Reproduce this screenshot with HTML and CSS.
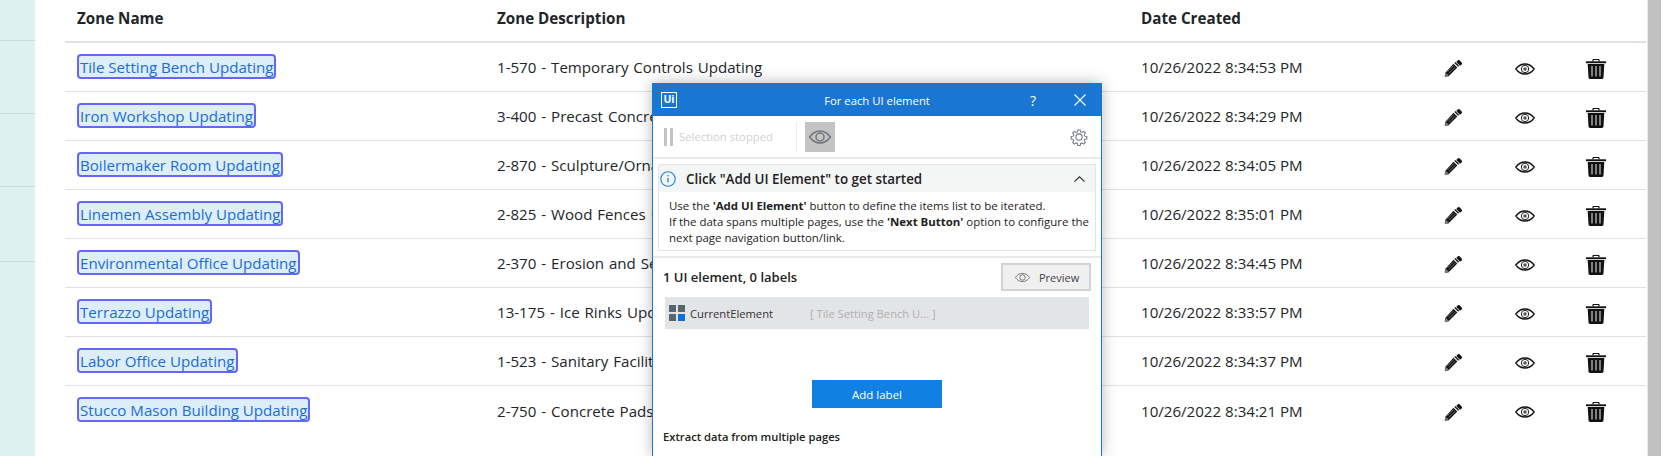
FILE: index.html
```html
<!DOCTYPE html>
<html lang="en">
<head>
<meta charset="utf-8">
<title>Zones</title>
<link rel="stylesheet" href="styles.css">
</head>
<body>
<svg class="defs" width="0" height="0" aria-hidden="true">
  <symbol id="i-pencil" viewBox="0 0 20 20">
    <path d="M14.6 1.4a1.3 1.3 0 0 1 1.800 0l2.200 2.200a1.300 1.300 0 0 1 0 1.800l-1.700 1.700-4-4z" fill="#111"/>
    <path d="M11.900 3.100l4 4-1 1-4-4z" fill="#111"/>
    <path d="M10 5l4 4-8.900 8.900-3.400.9-.9-.9.900-3.600z" fill="#111"/>
    <path d="M1.700 14.300l3.900 3.900-3.900 1-1-1z" fill="#777"/>
    <path d="M10.400 6.800l-7 7M12.100 8.300l-7 7" stroke="#999" stroke-width=".7"/>
  </symbol>
  <symbol id="i-eye" viewBox="0 0 20 12">
    <path d="M.8 6C3.400 2.600 6.500 1 10 1s6.600 1.600 9.200 5C16.600 9.400 13.500 11 10 11S3.400 9.400.8 6z" fill="none" stroke="#111" stroke-width="1.300"/>
    <circle cx="10" cy="6" r="3.700" fill="none" stroke="#222" stroke-width="1"/>
    <circle cx="10" cy="6" r="1.800" fill="#555"/>
  </symbol>
  <symbol id="i-trash" viewBox="0 0 20 20">
    <path d="M7 2.200V1.200C7 .6 7.500.4 8 .4h4c.5 0 1 .2 1 .8v1" fill="none" stroke="#111" stroke-width="1.200"/>
    <path d="M0 2.300h20v1.900H0z" fill="#111"/>
    <path d="M1.700 5h16.600l-.8 13.500c-.1.900-.7 1.400-1.500 1.400H4c-.8 0-1.400-.5-1.500-1.400z" fill="#111"/>
    <path d="M6 7v10.500M10 7v10.500M14 7v10.500" stroke="#ccc" stroke-width="1.200"/>
  </symbol>
  <symbol id="i-eye-thin" viewBox="0 0 30 20">
    <path d="M2 10C6 4.500 10 2.500 15 2.500S24 4.500 28 10C24 15.500 20 17.500 15 17.500S6 15.500 2 10z" fill="none" stroke="currentColor" stroke-width="1.800"/>
    <circle cx="15" cy="10" r="5" fill="none" stroke="currentColor" stroke-width="1.800"/>
  </symbol>
</svg>

<div class="page">
  <aside class="sidebar">
    <div class="side-item side-first"></div>
    <div class="side-item"></div>
    <div class="side-item"></div>
    <div class="side-item side-last"></div>
  </aside>

  <main class="content">
    <table class="zones">
      <colgroup>
        <col class="c-name"><col class="c-desc"><col class="c-date"><col class="c-icon"><col class="c-icon"><col class="c-trash">
      </colgroup>
      <thead>
        <tr><th>Zone Name</th><th>Zone Description</th><th>Date Created</th><th></th><th></th><th></th></tr>
      </thead>
      <tbody>
        <tr>
          <td><a class="zone-link">Tile Setting Bench Updating</a></td><td class="desc">1-570 - Temporary Controls Updating</td><td>10/26/2022 8:34:53 PM</td>
          <td class="act"><svg class="ic-pencil"><use href="#i-pencil"/></svg></td><td class="act"><svg class="ic-eye"><use href="#i-eye"/></svg></td><td class="act act-last"><svg class="ic-trash"><use href="#i-trash"/></svg></td>
        </tr>
        <tr>
          <td><a class="zone-link">Iron Workshop Updating</a></td><td class="desc">3-400 - Precast Concrete Updating</td><td>10/26/2022 8:34:29 PM</td>
          <td class="act"><svg class="ic-pencil"><use href="#i-pencil"/></svg></td><td class="act"><svg class="ic-eye"><use href="#i-eye"/></svg></td><td class="act act-last"><svg class="ic-trash"><use href="#i-trash"/></svg></td>
        </tr>
        <tr>
          <td><a class="zone-link">Boilermaker Room Updating</a></td><td class="desc">2-870 - Sculpture/Ornamental Updating</td><td>10/26/2022 8:34:05 PM</td>
          <td class="act"><svg class="ic-pencil"><use href="#i-pencil"/></svg></td><td class="act"><svg class="ic-eye"><use href="#i-eye"/></svg></td><td class="act act-last"><svg class="ic-trash"><use href="#i-trash"/></svg></td>
        </tr>
        <tr>
          <td><a class="zone-link">Linemen Assembly Updating</a></td><td class="desc">2-825 - Wood Fences Updating</td><td>10/26/2022 8:35:01 PM</td>
          <td class="act"><svg class="ic-pencil"><use href="#i-pencil"/></svg></td><td class="act"><svg class="ic-eye"><use href="#i-eye"/></svg></td><td class="act act-last"><svg class="ic-trash"><use href="#i-trash"/></svg></td>
        </tr>
        <tr>
          <td><a class="zone-link">Environmental Office Updating</a></td><td class="desc">2-370 - Erosion and Sedimentation Updating</td><td>10/26/2022 8:34:45 PM</td>
          <td class="act"><svg class="ic-pencil"><use href="#i-pencil"/></svg></td><td class="act"><svg class="ic-eye"><use href="#i-eye"/></svg></td><td class="act act-last"><svg class="ic-trash"><use href="#i-trash"/></svg></td>
        </tr>
        <tr>
          <td><a class="zone-link">Terrazzo Updating</a></td><td class="desc">13-175 - Ice Rinks Updating</td><td>10/26/2022 8:33:57 PM</td>
          <td class="act"><svg class="ic-pencil"><use href="#i-pencil"/></svg></td><td class="act"><svg class="ic-eye"><use href="#i-eye"/></svg></td><td class="act act-last"><svg class="ic-trash"><use href="#i-trash"/></svg></td>
        </tr>
        <tr>
          <td><a class="zone-link">Labor Office Updating</a></td><td class="desc">1-523 - Sanitary Facilities Updating</td><td>10/26/2022 8:34:37 PM</td>
          <td class="act"><svg class="ic-pencil"><use href="#i-pencil"/></svg></td><td class="act"><svg class="ic-eye"><use href="#i-eye"/></svg></td><td class="act act-last"><svg class="ic-trash"><use href="#i-trash"/></svg></td>
        </tr>
        <tr class="last-row">
          <td><a class="zone-link">Stucco Mason Building Updating</a></td><td class="desc">2-750 - Concrete Pads Updating</td><td>10/26/2022 8:34:21 PM</td>
          <td class="act"><svg class="ic-pencil"><use href="#i-pencil"/></svg></td><td class="act"><svg class="ic-eye"><use href="#i-eye"/></svg></td><td class="act act-last"><svg class="ic-trash"><use href="#i-trash"/></svg></td>
        </tr>
      </tbody>
    </table>
  </main>

  <div class="scrollbar"><div class="thumb"></div></div>
</div>

<section class="dialog">
  <header class="titlebar">
    <div class="title-left"><span class="ui-logo">Ui</span></div>
    <div class="title-text">For each UI element</div>
    <div class="title-right">
      <span class="help">?</span>
      <svg class="close" viewBox="0 0 12 12"><path d="M.5.5l11 11M11.500.5l-11 11" stroke="#fff" stroke-width="1.100" fill="none"/></svg>
    </div>
  </header>

  <div class="toolbar">
    <span class="pause"><i></i><i></i></span>
    <span class="stopped">Selection stopped</span>
    <span class="tool-sep"></span>
    <span class="eye-btn"><svg class="eye-btn-ic"><use href="#i-eye-thin"/></svg></span>
    <svg class="gear" viewBox="0 0 24 24">
      <path d="M10.200 1.500h3.600l.6 3.100 2 .8 2.600-1.800 2.500 2.500-1.800 2.600.8 2 3.100.6v3.600l-3.100.6-.8 2 1.800 2.600-2.500 2.500-2.600-1.800-2 .8-.6 3.100h-3.600l-.6-3.100-2-.8-2.600 1.800-2.500-2.500 1.800-2.600-.8-2-3.100-.6v-3.600l3.100-.6.8-2-1.800-2.600 2.500-2.500 2.600 1.800 2-.8z" transform="translate(1.200 1.200) scale(.9)" fill="none" stroke="#6d7780" stroke-width="1.500"/>
      <circle cx="12" cy="12" r="4.200" fill="none" stroke="#6d7780" stroke-width="1.400"/>
    </svg>
  </div>

  <div class="info">
    <div class="info-head">
      <svg class="info-ic" viewBox="0 0 16 16"><circle cx="8" cy="8" r="7.200" fill="none" stroke="#1a7fe0" stroke-width="1.100"/><path d="M8 7v4.500" stroke="#1a7fe0" stroke-width="1.300"/><circle cx="8" cy="4.800" r=".8" fill="#1a7fe0"/></svg>
      <span class="info-title">Click "Add UI Element" to get started</span>
      <svg class="chev" viewBox="0 0 11 6"><path d="M.5 5.500L5.500.8l5 4.700" fill="none" stroke="#333" stroke-width="1.100"/></svg>
    </div>
    <div class="info-body">
      <p>Use the <b>'Add UI Element'</b> button to define the items list to be iterated.</p>
      <p>If the data spans multiple pages, use the <b>'Next Button'</b> option to configure the</p>
      <p>next page navigation button/link.</p>
    </div>
  </div>

  <div class="elements">
    <div class="elements-head">
      <span class="count">1 UI element, 0 labels</span>
      <button class="preview"><svg class="preview-ic"><use href="#i-eye-thin"/></svg>Preview</button>
    </div>
    <div class="element-row">
      <span class="grid-ic"><i></i><i></i><i></i><i class="blue"></i></span>
      <span class="el-name">CurrentElement</span>
      <span class="el-val">[ Tile Setting Bench U... ]</span>
    </div>
    <div class="add-wrap"><button class="add-label">Add label</button></div>
    <div class="extract">Extract data from multiple pages</div>
  </div>
</section>
</body>
</html>
```

FILE: styles.css
```css
* { box-sizing: border-box; }
html, body { margin: 0; padding: 0; height: 100%; overflow: hidden; background: #fff; }
body { font-family: "Open Sans", "Noto Sans", sans-serif; color: #212529; position: relative; }
.defs { position: absolute; }

.page { display: flex; height: 456px; }

.sidebar { width: 35px; flex: none; background: #ddf1f0; }
.side-item { height: 73px; border-bottom: 1px solid #c9dcdb; }
.side-first { height: 41px; }
.side-last { height: 75px; }

.content { width: 1612px; flex: none; padding-left: 30px; }
.zones { width: 1581px; table-layout: fixed; border-collapse: separate; border-spacing: 0; font-size: 15.100px; }
.c-name { width: 420px; }
.c-desc { width: 644px; }
.c-date { width: 289px; }
.c-icon { width: 71px; }
.c-trash { width: 86px; }

.zones th { height: 43px; padding: 0 12px 6px; text-align: left; font-weight: 700; font-size: 15.200px; color: #212529; border-bottom: 2px solid #dee2e6; }
.zones td { height: 49px; padding: 0 12px; border-bottom: 1px solid #dee2e6; white-space: nowrap; overflow: hidden; }
.zones .last-row td { border-bottom: 0; }
.zones td.desc { word-spacing: 1px; }

.zone-link { display: inline-block; height: 25px; line-height: 23px; margin-bottom: 2px; padding: 0 1px; border: 2px solid #6666ff; border-radius: 4px; background: #ddeef6; color: #1a6cdc; vertical-align: middle; }

.zones td.act { padding: 3px 0 0; text-align: center; line-height: 0; }
.zones td.act-last { padding-right: 14px; }
.act svg { display: inline-block; }
.ic-pencil { width: 19px; height: 19px; }
.ic-eye { width: 20px; height: 12px; }
.ic-trash { width: 20px; height: 20px; }

.scrollbar { width: 16px; flex: none; border-left: 1px solid #e8e8e8; height: 456px; }
.thumb { width: 13px; height: 100%; background: #c0c0c0; }

/* Floating dialog */
.dialog { position: absolute; left: 652px; top: 83px; width: 450px; height: 373px; background: #fff; border: 1px solid #1976d2; border-bottom: 0; box-shadow: 0 0 14px rgba(0,0,0,.28); overflow: hidden; color: #222; }

.titlebar { display: grid; grid-template-columns: 1fr auto 1fr; align-items: center; height: 32px; background: #1976d2; color: #fff; font-size: 11.300px; }
.title-left { padding-left: 8px; display: flex; }
.ui-logo { width: 16px; height: 16px; border: 1.500px solid #fff; font-size: 10.500px; font-weight: 700; line-height: 12px; text-align: center; }
.title-right { display: flex; justify-content: flex-end; align-items: center; gap: 38px; padding-right: 15px; }
.help { font-size: 14px; }
.close { width: 12px; height: 12px; }

.toolbar { display: flex; align-items: center; height: 43px; padding: 0 11px; border-bottom: 2px solid #e8e9ea; }
.pause { display: flex; gap: 3px; }
.pause i { display: block; width: 3px; height: 18px; background: #c4c4c4; }
.stopped { margin-left: 6px; width: 117px; font-size: 11.300px; color: #d2d2d2; white-space: nowrap; }
.tool-sep { width: 1px; height: 30px; background: #ececec; }
.eye-btn { display: flex; align-items: center; justify-content: center; width: 30px; height: 30px; margin-left: 8px; background: #c4c4c4; color: #6c757d; }
.eye-btn-ic { width: 24px; height: 16px; }
.gear { width: 18px; height: 18px; margin-left: auto; margin-right: 2px; }

.info { margin: 5px 5px 0; height: 87px; border: 1px solid #e3e4e4; }
.info-head { display: flex; align-items: center; height: 27px; padding: 0 6px 0 1px; background: #f4f5f5; }
.info-ic { width: 16px; height: 16px; flex: none; }
.info-title { margin-left: 10px; font-size: 13.400px; font-weight: 600; color: #222; white-space: nowrap; }
.chev { width: 11px; height: 6px; margin-left: auto; margin-right: 4px; }
.info-body { padding: 6px 10px 0; font-size: 11.450px; line-height: 16px; color: #222; }
.info-body p { margin: 0; white-space: nowrap; }
.info-body b { font-weight: 700; }

.elements { margin-top: 5px; border-top: 2px solid #e8e9ea; padding: 4px 10px 0; }
.elements-head { display: flex; align-items: center; justify-content: space-between; height: 30px; }
.count { font-size: 13px; font-weight: 600; }
.preview { display: flex; align-items: center; width: 90px; height: 28px; padding: 0 0 0 11px; background: #f0f0f1; border: 2px solid #d2d3d6; font: inherit; font-size: 11px; color: #444; }
.preview-ic { width: 17px; height: 11px; margin-right: 8px; color: #777; }

.element-row { display: flex; align-items: center; height: 32px; margin: 5px 2px 0; padding-left: 4px; background: #e3e4e6; font-size: 11.200px; }
.grid-ic { display: grid; grid-template-columns: 7px 7px; grid-template-rows: 7px 7px; gap: 2px; }
.grid-ic i { display: block; background: #566670; }
.grid-ic .blue { background: #0a6fe0; }
.el-name { margin-left: 5px; width: 120px; color: #333; }
.el-val { color: #b0b0b0; white-space: nowrap; }

.add-wrap { display: flex; justify-content: center; margin-top: 51px; }
.add-label { width: 130px; height: 28px; padding: 0; border: 0; background: #1080e2; color: #fff; font: inherit; font-size: 11.500px; }

.extract { margin-top: 21px; font-size: 11.200px; font-weight: 600; color: #222; }
```
